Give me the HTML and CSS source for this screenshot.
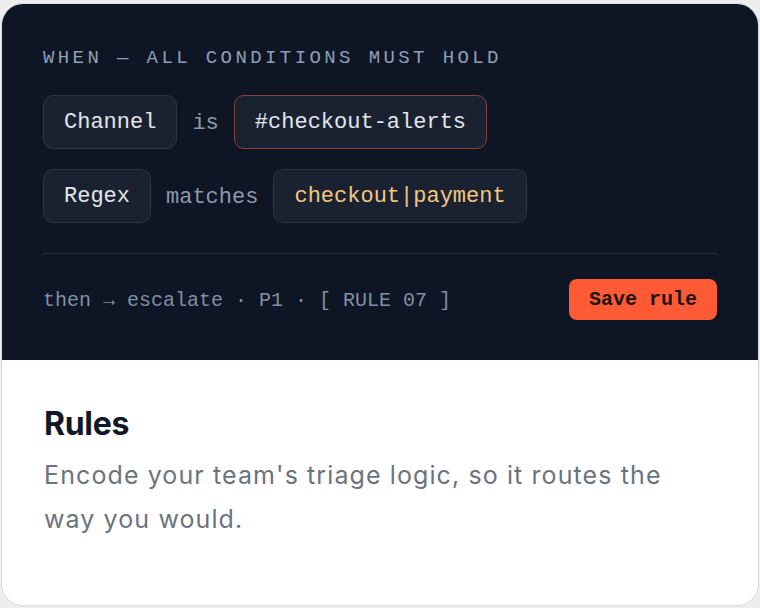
FILE: index.html
```html
<!DOCTYPE html>
<html lang="en">
<head>
  <meta charset="UTF-8">
  <meta name="viewport" content="width=device-width, initial-scale=1.0">
  <title>Rules</title>
  <link rel="stylesheet" href="styles.css">
</head>
<body>
  <div class="card">
    <div class="panel">
      <div class="when">WHEN — ALL CONDITIONS MUST HOLD</div>

      <div class="cond">
        <span class="chip">Channel</span>
        <span class="op">is</span>
        <span class="chip chip-active">#checkout-alerts</span>
      </div>

      <div class="cond">
        <span class="chip">Regex</span>
        <span class="op">matches</span>
        <span class="chip chip-value">checkout|payment</span>
      </div>

      <div class="footer">
        <span class="then">then → escalate · P1 · [ RULE 07 ]</span>
        <button class="save">Save rule</button>
      </div>
    </div>

    <div class="info">
      <h2>Rules</h2>
      <p>Encode your team's triage logic, so it routes the way you would.</p>
    </div>
  </div>
</body>
</html>
```

FILE: styles.css
```css
body {
  margin: 0;
  padding: 3px 1px 2px;
  background: #ededed;
}
.card {
  height: 603px;
  box-sizing: border-box;
  display: flex;
  flex-direction: column;
  background: #fff;
  border: 1px solid #dcdcdc;
  border-radius: 22px;
  overflow: hidden;
}
.panel {
  background: #0e1524;
  padding: 42px 41px 40px;
  font-family: "Liberation Mono", "DejaVu Sans Mono", monospace;
}
.when {
  font-size: 19px;
  line-height: 24px;
  letter-spacing: 3.4px;
  color: #8fa0b6;
  margin-bottom: 25px;
}
.cond {
  display: flex;
  align-items: center;
  gap: 15px;
  margin-bottom: 20px;
}
.chip {
  font-size: 22px;
  line-height: 28px;
  padding: 13px 20px 11px;
  color: #e2e6ed;
  background: #1a2231;
  border: 1px solid #2d3747;
  border-radius: 10px;
}
.chip-active {
  border-color: #87423b;
}
.chip-value {
  color: #f5c780;
}
.op {
  font-size: 22px;
  padding-top: 2px;
  color: #8d99ab;
}
.footer {
  display: flex;
  justify-content: space-between;
  align-items: center;
  border-top: 1px solid #242d3c;
  margin-top: 30px;
  padding-top: 25px;
}
.then {
  font-size: 20px;
  padding-top: 1px;
  color: #7f8fa6;
}
.save {
  font-family: "Liberation Mono", "DejaVu Sans Mono", monospace;
  font-size: 20px;
  font-weight: bold;
  line-height: 25px;
  padding: 8px 20px;
  color: #1c1412;
  background: #ff5a36;
  border: none;
  border-radius: 8px;
  cursor: pointer;
}
.info {
  flex: 1;
  padding: 44px 42px 0;
  font-family: Inter, "Noto Sans", sans-serif;
}
.info h2 {
  margin: 0 0 9px;
  font-size: 32px;
  line-height: 40px;
  font-weight: 700;
  color: #0f1729;
  letter-spacing: -0.3px;
}
.info p {
  margin: 0;
  max-width: 630px;
  font-size: 25px;
  line-height: 44px;
  letter-spacing: 1.1px;
  color: #6b7380;
}
```
